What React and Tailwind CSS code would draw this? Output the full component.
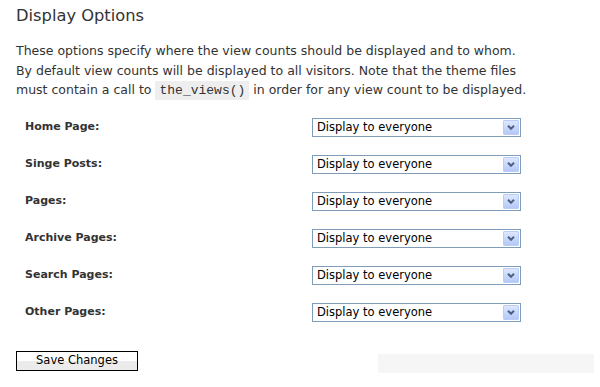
import React from "react";

const rows = ["Home Page:", "Singe Posts:", "Pages:", "Archive Pages:", "Search Pages:", "Other Pages:"];

function FakeSelect() {
  return (
    <div className="flex h-[19px] w-[209px] items-center border border-[#7f9db9] bg-white pl-[4px] pr-[1px]">
      <span className="flex-1 text-[11.5px] leading-[17px] text-black">Display to everyone</span>
      <div className="flex h-[15px] w-[16px] items-center justify-center rounded-[1px] border border-[#b9cdf7] bg-gradient-to-b from-[#dde7fe] to-[#b5c9f7]">
        <svg width="8" height="5" viewBox="0 0 8 5">
          <path d="M1 0.8 L4 3.8 L7 0.8" fill="none" stroke="#4d6185" strokeWidth="2" />
        </svg>
      </div>
    </div>
  );
}

export default function App() {
  return (
    <div className="h-[387px] w-[600px] overflow-hidden bg-white font-['DejaVu_Sans',sans-serif] text-[#333]">
      <div className="px-4 pt-[6px]">
        <h2 className="text-[16.3px] leading-[20px] text-[#333]">Display Options</h2>
        <p className="mt-[15px] text-[12.5px] leading-[19.5px] text-[#333]">
          These options specify where the view counts should be displayed and to whom.
          <br />
          By default view counts will be displayed to all visitors. Note that the theme files
          <br />
          must contain a call to{" "}
          <code className="bg-[#eeeeee] px-[4px] py-[2px] font-['Liberation_Mono',monospace] text-[13px] text-[#333]">
            the_views()
          </code>{" "}
          in order for any view count to be displayed.
        </p>
        <div className="mt-[8px] grid grid-cols-[296px_209px]">
          {rows.map((r) => (
            <React.Fragment key={r}>
              <div className="flex h-[37px] items-center pl-[9px] text-[11px] font-bold text-[#333]">{r}</div>
              <div className="flex h-[37px] items-center">
                <FakeSelect />
              </div>
            </React.Fragment>
          ))}
        </div>
      </div>
      <div className="mt-[20px] flex items-start pl-4 pr-[6px]">
        <button className="h-[20px] w-[122px] shrink-0 border border-[#000] bg-gradient-to-b from-white from-50% to-[#ebebeb] to-50% text-[11.5px] leading-[17px] text-black">
          Save Changes
        </button>
        <div className="ml-auto mt-[3px] h-[19px] w-[216px] bg-[#f6f6f6]" />
      </div>
    </div>
  );
}
